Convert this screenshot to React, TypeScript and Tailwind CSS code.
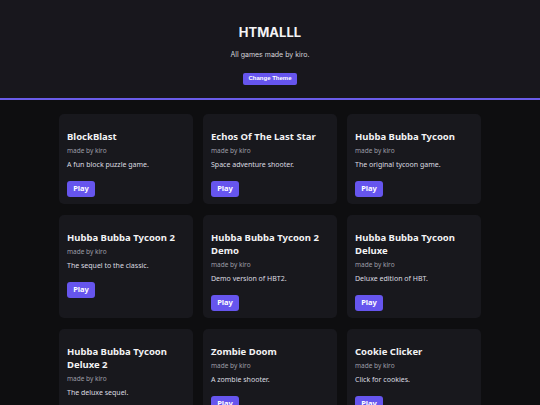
import React from "react";

const games = [
  { title: "BlockBlast", desc: "A fun block puzzle game." },
  { title: "Echos Of The Last Star", desc: "Space adventure shooter." },
  { title: "Hubba Bubba Tycoon", desc: "The original tycoon game." },
  { title: "Hubba Bubba Tycoon 2", desc: "The sequel to the classic." },
  { title: "Hubba Bubba Tycoon 2 Demo", desc: "Demo version of HBT2." },
  { title: "Hubba Bubba Tycoon Deluxe", desc: "Deluxe edition of HBT." },
  { title: "Hubba Bubba Tycoon Deluxe 2", desc: "The deluxe sequel." },
  { title: "Zombie Doom", desc: "A zombie shooter." },
  { title: "Cookie Clicker", desc: "Click for cookies." },
];

function Card({ title, desc }: { title: string; desc: string }) {
  return (
    <div className="bg-[#18181d] rounded-[5px] px-[8px] pt-[16px] pb-[7px] flex flex-col items-start font-['Noto_Sans',sans-serif]">
      <h3 className="text-[9.5px] font-bold leading-[13px] text-[#f2f2f4]">{title}</h3>
      <p className="mt-[3.5px] text-[6.5px] leading-[9px] text-[#9d9da6]">made by kiro</p>
      <p className="mt-[5px] text-[7px] leading-[10px] text-[#dcdce0]">{desc}</p>
      <button className="mt-[11px] w-[28px] h-[16px] rounded-[3px] bg-[#6655ee] text-[7.5px] font-bold text-white flex items-center justify-center">
        Play
      </button>
    </div>
  );
}

export default function App() {
  return (
    <div className="min-h-screen bg-[#0e0e10]">
      <header className="bg-[#18171d] pt-[24px] pb-[13.5px] flex flex-col items-center font-['Inter',sans-serif]">
        <h1 className="text-[13px] leading-[16px] font-bold text-[#f4f4f6]">HTMALLL</h1>
        <p className="mt-[9.5px] text-[7px] leading-[10px] text-[#d4d4da]">All games made by kiro.</p>
        <button className="mt-[13px] w-[54px] h-[12px] rounded-[2px] bg-[#6655ee] text-[6px] font-bold text-white flex items-center justify-center font-['Liberation_Sans',sans-serif]">
          Change Theme
        </button>
      </header>
      <div className="h-[1.5px] bg-[#6a5ce8]" />
      <main className="pt-[14px] pb-[14px]">
        <div className="w-[422px] mx-auto grid grid-cols-3 gap-x-[10px] gap-y-[10.5px]">
          {games.map((g) => (
            <Card key={g.title} title={g.title} desc={g.desc} />
          ))}
        </div>
      </main>
    </div>
  );
}
